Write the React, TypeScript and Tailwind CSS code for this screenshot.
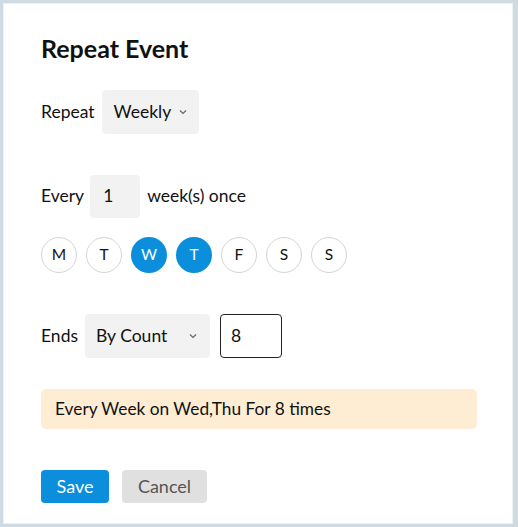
import { useState } from "react";

const DAYS = ["M", "T", "W", "T", "F", "S", "S"];

function Chevron() {
  return (
    <svg width="10" height="10" viewBox="0 0 10 10" className="text-[#666]">
      <path d="M2 3.5 L5 6.5 L8 3.5" fill="none" stroke="currentColor" strokeWidth="1.2" />
    </svg>
  );
}

export default function App() {
  const [picked] = useState([2, 3]);

  return (
    <div
      className="h-[527px] w-[518px] bg-[#cfdbe2] pt-[3px] pl-[3px] pr-[5px] pb-[3px] text-[#111]"
      style={{ fontFamily: "Lato, 'Open Sans', sans-serif" }}
    >
      <div className="h-full w-full border border-[#eef2f4] bg-white px-[37px] pt-[29px]">
        <h1 className="text-[25px] font-bold leading-[30px]">Repeat Event</h1>

        <div className="mt-[27px] flex items-center gap-[7px] text-[17.5px]">
          <span>Repeat</span>
          <div className="flex h-[44px] w-[97px] items-center justify-between rounded-[4px] bg-[#f2f2f2] pl-[12px] pr-[11px]">
            <span>Weekly</span>
            <Chevron />
          </div>
        </div>

        <div className="mt-[41px] flex items-center text-[17.5px]">
          <span>Every</span>
          <div className="ml-[6px] flex h-[43px] w-[50px] items-center rounded-[4px] bg-[#f2f2f2] pl-[13px]">1</div>
          <span className="ml-[7px]">week(s) once</span>
        </div>

        <div className="mt-[19px] flex gap-[9px]">
          {DAYS.map((d, i) =>
            picked.includes(i) ? (
              <div
                key={i}
                className="flex h-[36px] w-[36px] items-center justify-center rounded-full bg-[#0b8edb] text-[15.5px] text-white"
              >
                {d}
              </div>
            ) : (
              <div
                key={i}
                className="flex h-[36px] w-[36px] items-center justify-center rounded-full border border-[#d4d4d4] text-[15.5px]"
              >
                {d}
              </div>
            )
          )}
        </div>

        <div className="mt-[41px] flex items-center text-[17.5px]">
          <span>Ends</span>
          <div className="ml-[7px] flex h-[44px] w-[125px] items-center justify-between rounded-[4px] bg-[#f2f2f2] pl-[11px] pr-[12px]">
            <span>By Count</span>
            <Chevron />
          </div>
          <div className="ml-[10px] flex h-[44px] w-[62px] items-center rounded-[4px] border border-[#222] pl-[10px]">8</div>
        </div>

        <div className="mt-[31px] flex h-[40px] w-[436px] items-center rounded-[5px] bg-[#feedd3] pl-[14px] text-[17.3px]">
          Every Week on Wed,Thu For 8 times
        </div>

        <div className="mt-[41px] flex gap-[13px] text-[18px]">
          <button type="button" className="h-[33px] w-[68px] rounded-[4px] bg-[#0b8edb] text-white">
            Save
          </button>
          <button type="button" className="h-[33px] w-[85px] rounded-[4px] bg-[#e0e0e0] text-[#555]">
            Cancel
          </button>
        </div>
      </div>
    </div>
  );
}
